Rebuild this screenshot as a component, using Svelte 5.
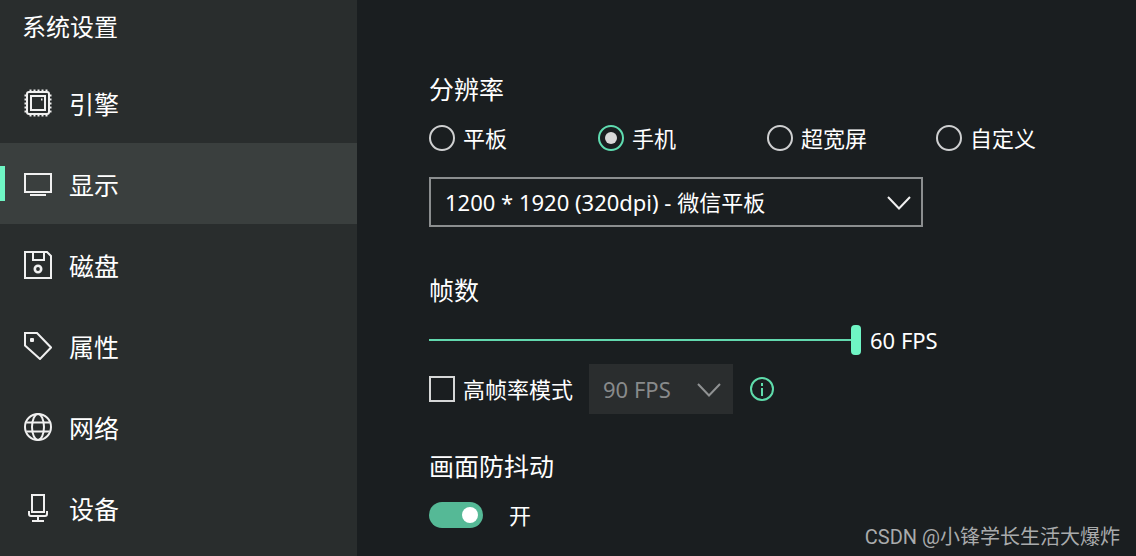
<script lang="ts">
  const sections = [
    { id: "engine", label: "引擎" },
    { id: "display", label: "显示" },
    { id: "disk", label: "磁盘" },
    { id: "props", label: "属性" },
    { id: "network", label: "网络" },
    { id: "device", label: "设备" },
  ];

  const modes = ["平板", "手机", "超宽屏", "自定义"];

  let active = $state("display");
  let mode = $state("手机");
  let fps = $state(60);
  let highFps = $state(false);
  let antiShake = $state(true);
</script>

{#snippet icon(id: string)}
  <svg class="icon" viewBox="0 0 28 28" aria-hidden="true">
    {#if id === "engine"}
      <rect x="3" y="3" width="22" height="22" rx="2" />
      <rect x="7" y="7" width="14" height="14" />
      <path d="M5.500 1.500h18M5.500 26.500h18" stroke-width="2" stroke-dasharray="2 2" />
      <path d="M1.500 5.500v18M26.500 5.500v18" stroke-width="2" stroke-dasharray="2 2" />
      <path d="M17 10.500h1.500" />
    {:else if id === "display"}
      <rect x="1" y="4" width="26" height="18" />
      <path d="M6 25h16" />
    {:else if id === "disk"}
      <path d="M1 1h22l4 4v22H1z" />
      <path d="M9 1v8h11V1" />
      <circle cx="14" cy="18" r="3.2" stroke-width="2.6" />
    {:else if id === "props"}
      <path d="M1 1h12l14 14.500L16 27 1 13.500z" />
      <rect class="dot" x="6" y="6" width="4" height="4" rx="1" />
    {:else if id === "network"}
      <circle cx="14" cy="14" r="13" />
      <ellipse cx="14" cy="14" rx="6" ry="13" />
      <path d="M2.500 9.500h23M2.500 18.500h23" />
    {:else}
      <rect x="8" y="1" width="12" height="17" />
      <path d="M5 17v3q0 2 2 2h14q2 0 2-2v-3M14 22v5M8 27h12" />
    {/if}
  </svg>
{/snippet}

{#snippet chevron()}
  <svg class="chevron" viewBox="0 0 24 14" aria-hidden="true">
    <path d="M1 1l11 11.500L23 1" />
  </svg>
{/snippet}

<div class="page">
  <aside>
    <h1>系统设置</h1>
    <nav>
      {#each sections as s}
        <button
          class="item"
          class:active={active === s.id}
          onclick={() => (active = s.id)}
        >
          {@render icon(s.id)}
          <span>{s.label}</span>
        </button>
      {/each}
    </nav>
  </aside>

  <main>
    <section>
      <h2>分辨率</h2>
      <div class="modes">
        {#each modes as m}
          <label>
            <input type="radio" name="mode" value={m} bind:group={mode} />
            {m}
          </label>
        {/each}
      </div>
      <div class="select resolution">
        <select aria-label="分辨率">
          <option>1200 * 1920 (320dpi) - 微信平板</option>
        </select>
        {@render chevron()}
      </div>
    </section>

    <section>
      <h2>帧数</h2>
      <div class="slider">
        <input id="fps" type="range" min="1" max="60" bind:value={fps} aria-label="帧数" />
        <label for="fps">{fps} FPS</label>
      </div>
      <div class="high">
        <label>
          <input type="checkbox" class="tick" bind:checked={highFps} />
          高帧率模式
        </label>
        <div class="select rate">
          <select aria-label="高帧率模式" disabled={!highFps}>
            <option>90 FPS</option>
          </select>
          {@render chevron()}
        </div>
        <svg class="info" viewBox="0 0 26 26" aria-hidden="true">
          <circle cx="13" cy="13" r="11" />
          <path d="M13 7v3M13 12v8" />
        </svg>
      </div>
    </section>

    <section>
      <h2>画面防抖动</h2>
      <label class="shake">
        <input type="checkbox" role="switch" class="switch" bind:checked={antiShake} />
        {antiShake ? "开" : "关"}
      </label>
    </section>
  </main>

  <div class="watermark">CSDN @小锋学长生活大爆炸</div>
</div>

<style>
  :global(body) {
    background: #1a1e20;
  }

  .page {
    position: relative;
    display: flex;
    min-height: 100vh;
    font-family: "Noto Sans", "Noto Sans CJK SC", sans-serif;
    font-size: 22px;
    color: #fff;
    background: #1a1e20;
  }

  h1,
  h2 {
    margin: 0;
    font-weight: 400;
  }

  input,
  select,
  button {
    appearance: none;
    margin: 0;
    padding: 0;
    border: 0;
    border-radius: 0;
    font: inherit;
    color: inherit;
    background: none;
  }

  aside {
    flex: 0 0 357px;
    background: #292d2d;
  }

  h1 {
    padding: 7px 22px 15px;
    font-size: 24px;
    line-height: 40px;
  }

  .item {
    position: relative;
    display: flex;
    align-items: center;
    gap: 17px;
    width: 100%;
    height: 81px;
    padding: 0 24px;
    font-size: 25px;
    line-height: 40px;
  }

  .item span {
    padding-top: 2px;
  }

  .active {
    background: #3a3f3e;
  }

  .active::before {
    content: "";
    position: absolute;
    left: 0;
    top: 23px;
    width: 5px;
    height: 35px;
    background: #6ff5c4;
  }

  .icon {
    width: 28px;
    height: 28px;
  }

  svg {
    flex: none;
    fill: none;
    stroke: #f0f0f0;
    stroke-width: 2;
  }

  .dot {
    fill: #f0f0f0;
    stroke: none;
  }

  main {
    flex: 1;
    padding: 70px 72px 28px;
  }

  h2 {
    font-size: 25px;
    line-height: 38px;
  }

  label {
    display: flex;
    align-items: center;
    gap: 8px;
    line-height: 26px;
    white-space: nowrap;
  }

  .modes {
    display: grid;
    grid-template-columns: repeat(4, 169px);
    height: 28px;
    margin: 16px 0 25px;
  }

  input[type="radio"] {
    display: grid;
    place-items: center;
    width: 26px;
    height: 26px;
    border: 2px solid #cfd0d1;
    border-radius: 50%;
  }

  input[type="radio"]:checked {
    border-color: #5fdcb0;
  }

  input[type="radio"]:checked::before {
    content: "";
    width: 12px;
    height: 12px;
    border-radius: 50%;
    background: #d8d8d8;
  }

  .select {
    position: relative;
    height: 50px;
  }

  .select select {
    width: 100%;
    height: 100%;
    padding: 0 14px;
  }

  .select .chevron {
    position: absolute;
    right: 12px;
    top: 19px;
    width: 24px;
    height: 14px;
    pointer-events: none;
  }

  .resolution {
    max-width: 494px;
    margin-bottom: 44px;
  }

  .resolution select {
    border: 2px solid #8b8e8f;
  }

  .slider {
    display: flex;
    align-items: center;
    gap: 9px;
    height: 30px;
    margin: 16px 0 9px;
  }

  input[type="range"] {
    width: 432px;
    height: 30px;
    background: linear-gradient(#62d9ae, #62d9ae) center / 100% 2px no-repeat;
  }

  input[type="range"]::-webkit-slider-thumb {
    appearance: none;
    width: 10px;
    height: 30px;
    border-radius: 4px;
    background: #6ff5c4;
  }

  .high {
    display: flex;
    align-items: center;
    height: 50px;
    margin-bottom: 33px;
  }

  .tick {
    width: 26px;
    height: 26px;
    border: 2px solid #d6d7d7;
  }

  .tick:checked {
    background: #55bd98;
  }

  .rate {
    width: 144px;
    margin: 0 16px;
    background: #2a2d2e;
  }

  .rate select:disabled {
    opacity: 1;
    color: #888a8b;
  }

  .rate .chevron {
    stroke: #909293;
  }

  .info {
    width: 26px;
    height: 26px;
    stroke: #5fdcab;
  }

  .shake {
    gap: 26px;
    height: 26px;
    margin-top: 17px;
  }

  .switch {
    display: flex;
    align-items: center;
    width: 54px;
    height: 26px;
    padding: 0 5px;
    border-radius: 13px;
    background: #6b6f70;
  }

  .switch::before {
    content: "";
    width: 16px;
    height: 16px;
    border-radius: 50%;
    background: #fff;
  }

  .switch:checked {
    justify-content: flex-end;
    background: #55b996;
  }

  .watermark {
    position: absolute;
    right: 16px;
    bottom: 4px;
    font-family: Roboto, "Noto Sans CJK SC", sans-serif;
    font-size: 20px;
    line-height: 30px;
    color: #a9abac;
  }
</style>
